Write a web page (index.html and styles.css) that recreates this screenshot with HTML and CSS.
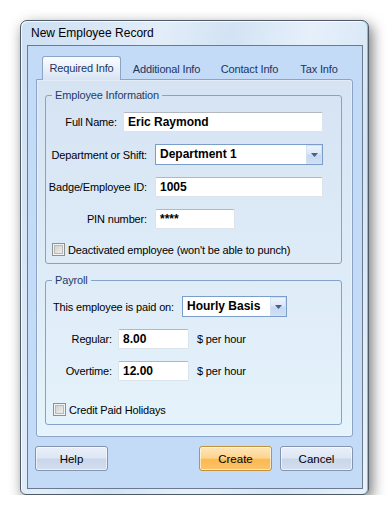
FILE: index.html
```html
<!DOCTYPE html>
<html lang="en">
<head>
    <meta charset="UTF-8">
    <meta name="viewport" content="width=device-width, initial-scale=1.0">
    <title>New Employee Record</title>
    <link rel="stylesheet" href="styles.css">
</head>
<body>
    <div class="window">
        <div class="titlebar">New Employee Record</div>
        <div class="client">
            <div class="tabs">
                <div class="tab active" style="width: 79px">Required Info</div>
                <div class="tab" style="width: 91px">Additional Info</div>
                <div class="tab" style="width: 75px">Contact Info</div>
                <div class="tab" style="width: 64px">Tax Info</div>
            </div>
            <div class="panel">
                <fieldset class="group group-employee">
                    <legend>Employee Information</legend>
                    <div class="row">
                        <label class="label label-short">Full Name:</label>
                        <div class="field field-name">Eric Raymond</div>
                    </div>
                    <div class="row">
                        <label class="label label-long">Department or Shift:</label>
                        <div class="combo combo-dept">
                            <span class="combo-value">Department 1</span>
                            <span class="combo-drop">
                                <svg width="7" height="4" viewBox="0 0 7 4"><polygon points="0,0 7,0 3.5,4" fill="#4a5f82"/></svg>
                            </span>
                        </div>
                    </div>
                    <div class="row">
                        <label class="label label-long">Badge/Employee ID:</label>
                        <div class="field field-badge">1005</div>
                    </div>
                    <div class="row">
                        <label class="label label-long">PIN number:</label>
                        <div class="field field-pin">****</div>
                    </div>
                    <div class="check-row check-deactivated">
                        <span class="checkbox"></span>
                        <span>Deactivated employee (won't be able to punch)</span>
                    </div>
                </fieldset>

                <fieldset class="group group-payroll">
                    <legend>Payroll</legend>
                    <div class="row row-paid">
                        <label class="label label-paid">This employee is paid on:</label>
                        <div class="combo combo-basis">
                            <span class="combo-value">Hourly Basis</span>
                            <span class="combo-drop">
                                <svg width="7" height="4" viewBox="0 0 7 4"><polygon points="0,0 7,0 3.5,4" fill="#4a5f82"/></svg>
                            </span>
                        </div>
                    </div>
                    <div class="row">
                        <label class="label label-rate">Regular:</label>
                        <div class="field field-rate">8.00</div>
                        <span class="unit">$ per hour</span>
                    </div>
                    <div class="row">
                        <label class="label label-rate">Overtime:</label>
                        <div class="field field-rate">12.00</div>
                        <span class="unit">$ per hour</span>
                    </div>
                    <div class="check-row check-holidays">
                        <span class="checkbox"></span>
                        <span>Credit Paid Holidays</span>
                    </div>
                </fieldset>
            </div>
            <div class="buttons">
                <button class="btn btn-help">Help</button>
                <button class="btn btn-create">Create</button>
                <button class="btn">Cancel</button>
            </div>
        </div>
    </div>
</body>
</html>
```

FILE: styles.css
```css
body {
    margin: 0;
    padding: 20px 0 0 20px;
    background-color: #ffffff;
    font-family: "Liberation Sans", Arial, sans-serif;
    font-size: 11px;
    letter-spacing: -0.15px;
    color: #000;
}

.window {
    box-sizing: border-box;
    width: 349px;
    height: 475px;
    border: 1px solid #4f5a68;
    border-radius: 7px 7px 6px 6px;
    background: linear-gradient(105deg, #cddff3 0%, #e2edf8 30%, #d3e3f4 45%, #e6f0fa 62%, #d5e5f5 80%, #e9f2fb 100%);
    box-shadow: inset -1px 0 0 #62c8ea, inset 1px 1px 0 rgba(255, 255, 255, 0.8), 3px 5px 14px rgba(0, 0, 0, 0.55);
    display: flex;
    flex-direction: column;
}

.titlebar {
    height: 24px;
    line-height: 25px;
    padding-left: 10px;
    font-size: 12px;
    letter-spacing: 0;
    color: #000;
}

.client {
    flex: 1;
    margin: 0 5px 5px 6px;
    border: 1px solid #6a7b90;
    background-color: #c4dbf8;
    padding: 11px 9px 0 8px;
    display: flex;
    flex-direction: column;
}

/* tabs */
.tabs {
    display: flex;
    align-items: flex-end;
    height: 23px;
    padding-left: 6px;
    margin-bottom: -1px;
}

.tab {
    box-sizing: border-box;
    height: 21px;
    line-height: 20px;
    text-align: center;
    color: #1b3560;
}

.tab.active {
    height: 24px;
    line-height: 22px;
    border: 1px solid #8ca4c5;
    border-bottom: none;
    border-radius: 3px 3px 0 0;
    background: linear-gradient(#fbfdff, #d8e4f3);
    position: relative;
    z-index: 1;
}

.panel {
    border: 1px solid #8ca4c5;
    border-radius: 0 3px 3px 3px;
    background: linear-gradient(#d6e3f3, #e5f3fc);
    padding: 9px 10px 11px 8px;
    box-shadow: inset 0 0 0 1px rgba(255, 255, 255, 0.35);
}

/* group boxes */
.group {
    margin: 0;
    padding: 10px 0 7px 0;
    min-width: 0;
    border: 1px solid #86a2c7;
    border-radius: 3px;
    display: flex;
    flex-direction: column;
    gap: 12px;
}

.group legend {
    margin-left: 6px;
    padding: 0 3px;
    line-height: 13px;
    font-size: 11px;
    color: #1e3b68;
}

.group-payroll {
    margin-top: 10px;
    padding: 9px 0 8px 0;
}

.row {
    display: flex;
    align-items: center;
}

.label {
    text-align: right;
    white-space: nowrap;
}

.label-short {
    width: 71px;
    margin-right: 6px;
}

.label-long {
    width: 101px;
    margin-right: 8px;
}

.label-paid {
    width: 119px;
    margin-right: 10px;
    text-align: left;
    padding-left: 7px;
}

.label-rate {
    width: 66px;
    margin-right: 6px;
}

/* text boxes */
.field {
    box-sizing: border-box;
    height: 20px;
    line-height: 19px;
    padding: 0 4px;
    background: #fff;
    border: 1px solid #dde3ea;
    border-top-color: #b3b8c0;
    border-radius: 2px;
    font-size: 12px;
    font-weight: bold;
    letter-spacing: 0;
    white-space: nowrap;
}

.field-name {
    width: 200px;
}

.field-badge {
    width: 168px;
}

.field-pin {
    width: 80px;
}

.field-rate {
    width: 71px;
}

.unit {
    margin-left: 8px;
}

/* combo boxes */
.combo {
    box-sizing: border-box;
    height: 21px;
    display: flex;
    background: #fff;
    border: 1px solid #7a9dc9;
}

.combo-dept {
    width: 168px;
}

.combo-basis {
    width: 105px;
}

.combo-value {
    flex: 1;
    padding-left: 4px;
    line-height: 19px;
    font-size: 12px;
    font-weight: bold;
    letter-spacing: 0;
    white-space: nowrap;
}

.combo-drop {
    box-sizing: border-box;
    width: 16px;
    border: 1px solid #d3e1f4;
    background: linear-gradient(#edf3fc 0%, #dce8f8 45%, #c6d8f1 55%, #cfdff4 100%);
    display: flex;
    align-items: center;
    justify-content: center;
}

/* check boxes */
.check-row {
    display: flex;
    align-items: center;
    height: 13px;
}

.check-deactivated {
    margin-top: 2px;
    padding-left: 6px;
}

.check-holidays {
    margin-top: 10px;
    padding-left: 7px;
}

.checkbox {
    box-sizing: border-box;
    width: 13px;
    height: 13px;
    margin-right: 3px;
    border: 1px solid #8e8f8f;
    background: linear-gradient(135deg, #cbcbcb, #f4f4f4);
    box-shadow: inset 0 0 0 1px #f4f4f4, inset 0 0 0 2px #b9b9b9;
}

/* buttons */
.buttons {
    display: flex;
    margin: 9px 0 0 -1px;
    gap: 8px;
}

.btn {
    box-sizing: border-box;
    width: 73px;
    height: 25px;
    padding: 0;
    border: 1px solid #8394b0;
    border-radius: 3px;
    background: linear-gradient(#eaf0f9 0%, #dde6f3 48%, #c9d6ea 52%, #d3dfef 100%);
    box-shadow: inset 0 0 0 1px rgba(255, 255, 255, 0.6);
    font-family: "Liberation Sans", Arial, sans-serif;
    font-size: 11.5px;
    color: #000;
}

.btn-help {
    margin-right: auto;
}

.btn-create {
    border-color: #c1913c;
    background: linear-gradient(#fde7bb 0%, #fdd48e 48%, #fbb84f 55%, #fcc46a 100%);
}
```
